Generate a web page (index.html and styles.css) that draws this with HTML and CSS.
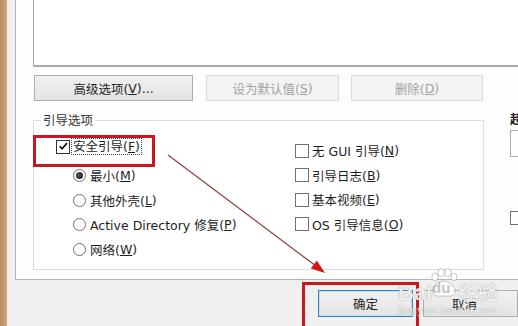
FILE: index.html
```html
<!DOCTYPE html>
<html lang="zh-CN">
<head>
<meta charset="utf-8">
<title>系统配置 - 引导</title>
<link rel="stylesheet" href="styles.css">
</head>
<body>
<div class="screen">
  <div class="strip"></div>
  <div class="window">
    <div class="panel">
      <div class="listbox"></div>
      <div class="btn-row">
        <div class="btn w1">高级选项(<u>V</u>)...</div>
        <div class="btn w2 disabled">设为默认值(<u>S</u>)</div>
        <div class="btn w3 disabled">删除(<u>D</u>)</div>
      </div>
      <div class="opt-row">
        <div class="group">
          <div class="group-title">引导选项</div>
          <div class="group-body">
            <div class="col-left">
              <div class="item safe">
                <span class="cb dark"><svg viewBox="0 0 13 13" width="11" height="11"><path d="M2 6.2 L4.8 9.2 L10.6 2.6" fill="none" stroke="#111" stroke-width="2.1"/></svg></span>
                <span class="focus">安全引导(<u>F</u>)</span>
              </div>
              <div class="item sub"><span class="rb on"></span>最小(<u>M</u>)</div>
              <div class="item sub"><span class="rb"></span>其他外壳(<u>L</u>)</div>
              <div class="item sub"><span class="rb"></span>Active Directory 修复(<u>P</u>)</div>
              <div class="item sub"><span class="rb"></span>网络(<u>W</u>)</div>
            </div>
            <div class="col-right">
              <div class="item"><span class="cb"></span>无 GUI 引导(<u>N</u>)</div>
              <div class="item"><span class="cb"></span>引导日志(<u>B</u>)</div>
              <div class="item"><span class="cb"></span>基本视频(<u>E</u>)</div>
              <div class="item"><span class="cb"></span>OS 引导信息(<u>O</u>)</div>
            </div>
          </div>
        </div>
        <div class="side">
          <div class="side-label">超时(<u>T</u>):</div>
          <div class="side-input"></div>
          <div class="side-cb"><span class="cb"></span></div>
        </div>
      </div>
    </div>
    <div class="footer">
      <div class="btn ok">确定</div>
      <div class="btn cancel">取消</div>
    </div>
  </div>

  <div class="mark mark-safe"></div>
  <div class="mark mark-ok"></div>
  <svg class="arrow" width="518" height="326" viewBox="0 0 518 326">
    <line x1="168" y1="155" x2="314" y2="264.6" stroke="#8c3c3c" stroke-width="1.2"/>
    <polygon points="325,273 310.8,268.6 316.8,260.6" fill="#d0161e"/>
  </svg>
  <div class="watermark">
    <span class="wm-bai">Bai</span>
    <span class="wm-paw">
      <svg viewBox="0 0 30 30" width="30" height="30">
        <g fill="rgba(255,255,255,0.85)" stroke="rgba(130,130,130,0.55)" stroke-width="0.8">
          <ellipse cx="7" cy="9" rx="3.2" ry="4"/>
          <ellipse cx="13" cy="4.5" rx="3.2" ry="4"/>
          <ellipse cx="20" cy="4.5" rx="3.2" ry="4"/>
          <ellipse cx="26" cy="9" rx="3" ry="3.8"/>
          <path d="M5 25 C4 18 10 13 15 13 C21 13 28 18 27 25 C26 29 20 28 16 28 C11 28 6 29 5 25 Z"/>
        </g>
      </svg>
      <span class="wm-du">du</span>
    </span>
    <span class="wm-jy">经验</span>
    <div class="wm-url">jingyan.baidu.com</div>
  </div>
</div>
</body>
</html>
```

FILE: styles.css
```css
* { box-sizing: border-box; }

html, body {
  margin: 0;
  padding: 0;
  background: #f0f0f0;
}

.screen {
  position: relative;
  width: 518px;
  height: 326px;
  overflow: hidden;
  display: flex;
  font-family: "DejaVu Sans", "Noto Sans CJK SC", sans-serif;
  font-size: 12.5px;
  color: #1e1e1e;
}

.strip {
  flex: none;
  width: 7px;
  background: linear-gradient(90deg, #b98a62, #c79c74 60%, #cfa882);
}

.window {
  flex: 1;
  display: flex;
  flex-direction: column;
  background: #f0f0f0;
  min-width: 0;
}

.panel {
  flex: none;
  height: 280px;
  margin-left: 8px;
  padding-left: 17px;
  background: #fdfdfd;
  border-left: 1px solid #b4b4b4;
  border-bottom: 1px solid #b4b4b4;
  overflow: hidden;
}

.listbox {
  height: 67px;
  margin-right: -10px;
  background: #fff;
  border-left: 1px solid #a9a9a9;
  border-bottom: 2px solid #a9a9a9;
}

.btn-row {
  display: flex;
  margin-top: 8px;
  margin-left: 1px;
  gap: 13px;
}

.btn {
  flex: none;
  height: 26px;
  display: flex;
  align-items: center;
  justify-content: center;
  background: linear-gradient(#f0f0f0, #e4e4e4);
  border: 1px solid #adadad;
  color: #1e1e1e;
  white-space: nowrap;
}

.btn.disabled {
  background: #f3f3f3;
  border-color: #dadada;
  color: #a2a2a2;
}

.w1 { width: 159px; }
.w2 { width: 133px; }
.w3 { width: 132px; margin-left: -1px; }

.opt-row {
  display: flex;
  margin-top: 19px;
}

.group {
  flex: none;
  width: 451px;
  height: 150px;
  background: #fff;
  border: 1px solid #dcdcdc;
}

.group-title {
  width: fit-content;
  margin: -8px 0 0 7px;
  padding: 0 2px;
  line-height: 16px;
  background: #fdfdfd;
  color: #333;
}

.group-body {
  display: grid;
  grid-template-columns: 261px 1fr;
}

.col-left {
  padding: 5.8px 0 0 22px;
}

.col-right {
  padding-top: 9.8px;
}

.item {
  height: 24.4px;
  display: flex;
  align-items: center;
  white-space: nowrap;
}

.item.safe {
  margin-bottom: 4.6px;
}

.item.sub {
  padding-left: 17px;
}

.cb {
  flex: none;
  width: 14px;
  height: 14px;
  margin-right: 3px;
  display: flex;
  align-items: center;
  justify-content: center;
  background: #fff;
  border: 1px solid #707070;
}

.cb.dark {
  border-color: #333;
  margin-right: 1px;
}

.focus {
  padding: 0 1px;
  line-height: 15px;
  border: 1px dotted #444;
}

.rb {
  flex: none;
  width: 13px;
  height: 13px;
  margin-right: 4px;
  border: 1px solid #707070;
  border-radius: 50%;
  background: #fff;
  display: flex;
  align-items: center;
  justify-content: center;
}

.rb.on::after {
  content: "";
  width: 7px;
  height: 7px;
  border-radius: 50%;
  background: radial-gradient(circle at 40% 40%, #555, #111);
}

.side {
  flex: none;
  width: 120px;
  margin-left: 26px;
  margin-top: -8px;
}

.side-label {
  line-height: 16px;
  font-weight: bold;
}

.side-input {
  height: 27px;
  margin-top: 2px;
  background: #fff;
  border: 1px solid #ababab;
}

.side-cb {
  margin-top: 54px;
  display: flex;
}

.footer {
  flex: 1;
  display: flex;
  gap: 10px;
  padding: 10px 0 0 311px;
}

.btn.ok,
.btn.cancel {
  width: 95px;
  height: 27px;
}

.btn.cancel {
  padding-right: 12px;
}

.btn.ok {
  border: 1px solid #3c7fb1;
  box-shadow: inset 0 0 0 1px #bde0f6;
}

/* annotation overlays */
.mark {
  position: absolute;
  border: 3px solid #c8181f;
}

.mark-safe {
  left: 33px;
  top: 135px;
  width: 122px;
  height: 32px;
}

.mark-ok {
  left: 302px;
  top: 282px;
  width: 117px;
  height: 50px;
}

.arrow {
  position: absolute;
  left: 0;
  top: 0;
  pointer-events: none;
}

.watermark {
  position: absolute;
  left: 398px;
  top: 268px;
  width: 130px;
  height: 52px;
  color: rgba(255, 255, 255, 0.85);
  text-shadow: 0 0 1px rgba(100, 100, 100, 0.7);
  font-family: "Liberation Sans", "Noto Sans CJK SC", sans-serif;
  font-weight: bold;
  font-size: 22px;
  line-height: 24px;
}

.wm-bai {
  position: absolute;
  left: 0;
  top: 13px;
}

.wm-paw {
  position: absolute;
  left: 30px;
  top: 0;
  width: 30px;
  height: 30px;
}

.wm-paw svg {
  display: block;
}

.wm-du {
  position: absolute;
  left: 4px;
  top: 12px;
  font-size: 15px;
  line-height: 15px;
  color: rgba(160, 160, 160, 0.6);
  text-shadow: none;
}

.wm-jy {
  position: absolute;
  left: 60px;
  top: 12px;
  font-family: "Noto Sans CJK SC", sans-serif;
  font-size: 20px;
}

.wm-url {
  position: absolute;
  left: 0;
  top: 36px;
  font-size: 11px;
  line-height: 12px;
  font-weight: normal;
  letter-spacing: 0.6px;
}
```
